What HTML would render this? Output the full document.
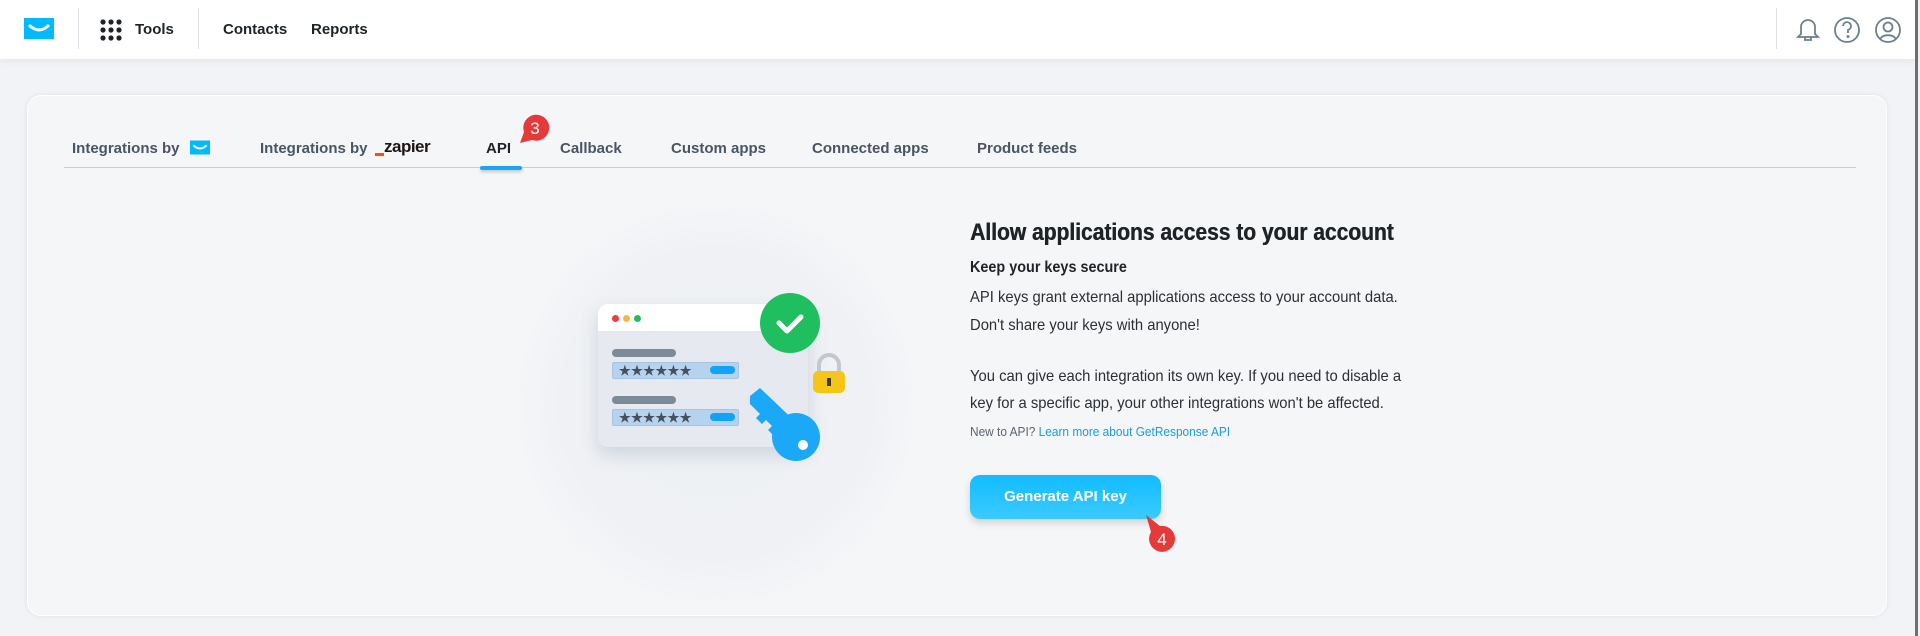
<!DOCTYPE html>
<html><head><meta charset="utf-8"><style>
*{margin:0;padding:0;box-sizing:border-box}
body{width:1920px;height:636px;background:#f1f3f6;font-family:"Liberation Sans",sans-serif;position:relative;overflow:hidden;color:#1e2328}
.hdr{position:absolute;left:0;top:0;width:1916px;height:59px;background:#fff;box-shadow:0 2px 8px rgba(0,0,0,.06)}
.a{position:absolute;white-space:nowrap}
.nav{font-weight:bold;font-size:15px;color:#1e2328;top:21px}
.vd{position:absolute;width:1px;background:#dcdfe3;top:8px;height:41px}
.card{position:absolute;left:27px;top:95px;width:1860px;height:521px;background:#f5f6f8;border-radius:14px;box-shadow:0 0 6px rgba(0,0,0,.08);border:1px solid #fff}
.tab{font-weight:bold;font-size:15px;color:#4a5563;top:140px}
.body{font-size:16px;color:#2a2f36;transform-origin:left;transform:scaleX(.925)}
</style></head><body>
<div class="hdr"></div>
<svg class="a" style="left:24px;top:18px" width="30" height="21" viewBox="0 0 30 21"><rect width="30" height="21" fill="#00baff"/><path d="M5 7 Q15 17 25 7" stroke="#fff" stroke-width="3" fill="none"/></svg>
<div class="vd" style="left:78px"></div>
<svg class="a" style="left:100px;top:19px" width="22" height="22"><g fill="#1e2328"><circle cx="3" cy="3" r="2.6"/><circle cx="11" cy="3" r="2.6"/><circle cx="19" cy="3" r="2.6"/><circle cx="3" cy="11" r="2.6"/><circle cx="11" cy="11" r="2.6"/><circle cx="19" cy="11" r="2.6"/><circle cx="3" cy="19" r="2.6"/><circle cx="11" cy="19" r="2.6"/><circle cx="19" cy="19" r="2.6"/></g></svg>
<div class="a nav" style="left:135px">Tools</div>
<div class="vd" style="left:198px"></div>
<div class="a nav" style="left:223px">Contacts</div>
<div class="a nav" style="left:311px">Reports</div>
<div class="vd" style="left:1776px"></div>
<svg class="a" style="left:1795px;top:15px" width="110" height="30" viewBox="0 0 110 30" fill="none" stroke="#6e7f8e" stroke-width="1.8"><path d="M3 22 L6 19 V12 a7 7 0 0 1 14 0 V19 L23 22 Z M10 22 v3 h6 v-3"/><circle cx="52" cy="15" r="12"/><path d="M48 11 a4 4 0 1 1 5 4 v3"/><circle cx="53" cy="21.5" r=".6" fill="#6e7f8e"/><circle cx="93" cy="15" r="12"/><circle cx="93" cy="12" r="4.5"/><path d="M85 24 a9 7 0 0 1 16 0"/></svg>
<div class="a" style="left:1915px;top:0;width:3px;height:636px;background:#6f6f6f"></div>
<div class="card"></div>
<div class="a tab" style="left:72px">Integrations by</div>
<svg class="a" style="left:190px;top:140px" width="20" height="15" viewBox="0 0 30 21"><rect width="30" height="21" fill="#00baff"/><path d="M5 7 Q15 17 25 7" stroke="#fff" stroke-width="3" fill="none"/></svg>
<div class="a tab" style="left:260px">Integrations by</div>
<div class="a" style="left:375px;top:153px;width:9px;height:3px;background:#ff4f00"></div>
<div class="a" style="left:384px;top:137px;font-weight:bold;font-size:17px;color:#201515;letter-spacing:-.5px">zapier</div>
<div class="a tab" style="left:486px;color:#1e2328">API</div>
<div class="a tab" style="left:560px">Callback</div>
<div class="a tab" style="left:671px">Custom apps</div>
<div class="a tab" style="left:812px">Connected apps</div>
<div class="a tab" style="left:977px">Product feeds</div>
<div class="a" style="left:64px;top:167px;width:1792px;height:1px;background:#c9cdd2"></div>
<div class="a" style="left:480px;top:166px;width:42px;height:4px;border-radius:2px;background:#1aa6f0;box-shadow:0 2px 3px rgba(0,0,0,.2)"></div>
<svg class="a" style="left:512px;top:112px" width="40" height="36"><path d="M8 31 L12 20 A13 13 0 1 1 20 28 Z" fill="#e53a3a"/><text x="23" y="22" font-family="Liberation Sans" font-size="17" fill="#fff" text-anchor="middle">3</text></svg>
<!-- illustration -->
<div class="a" style="left:516px;top:204px;width:400px;height:400px;border-radius:50%;background:radial-gradient(circle,#eef1f4 0%,#eff1f5 55%,rgba(245,246,248,0) 72%)"></div>
<div class="a" style="left:598px;top:304px;width:210px;height:143px;border-radius:10px;background:#e6eaf0;box-shadow:0 8px 18px rgba(80,100,130,.2);overflow:hidden"><div style="height:27px;background:#fff"></div></div>
<div class="a" style="left:612px;top:315px;width:7px;height:7px;border-radius:50%;background:#ee3b3b"></div>
<div class="a" style="left:623px;top:315px;width:7px;height:7px;border-radius:50%;background:#f4b942"></div>
<div class="a" style="left:634px;top:315px;width:7px;height:7px;border-radius:50%;background:#1fbf5f"></div>
<div class="a" style="left:612px;top:349px;width:64px;height:8px;border-radius:4px;background:#7d8a98"></div>
<div class="a" style="left:612px;top:362px;width:127px;height:17px;border-radius:2px;background:#b5d3ef;border:1px solid #a7c4e0;font-size:13px;color:#46505c;font-weight:bold;padding-left:6px;line-height:15px;letter-spacing:.5px">★★★★★★</div>
<div class="a" style="left:710px;top:366px;width:25px;height:8px;border-radius:4px;background:#10a3f6"></div>
<div class="a" style="left:612px;top:396px;width:64px;height:8px;border-radius:4px;background:#7d8a98"></div>
<div class="a" style="left:612px;top:409px;width:127px;height:17px;border-radius:2px;background:#b5d3ef;border:1px solid #a7c4e0;font-size:13px;color:#46505c;font-weight:bold;padding-left:6px;line-height:15px;letter-spacing:.5px">★★★★★★</div>
<div class="a" style="left:710px;top:413px;width:25px;height:8px;border-radius:4px;background:#10a3f6"></div>
<svg class="a" style="left:758px;top:290px" width="80" height="68"><circle cx="32" cy="33" r="30" fill="#1fbf5f"/><path d="M21 33 L29 41 L43 27" stroke="#fff" stroke-width="5" fill="none" stroke-linecap="round" stroke-linejoin="round"/></svg>
<svg class="a" style="left:810px;top:353px" width="40" height="46"><path d="M9 19 V12 a10 10 0 0 1 20 0 V19" stroke="#c3c8ce" stroke-width="4" fill="none"/><rect x="3" y="18" width="32" height="22" rx="5" fill="#f5c518"/><rect x="17" y="25" width="4" height="8" fill="#3a3a3a"/></svg>
<svg class="a" style="left:748px;top:388px" width="80" height="76"><path d="M12 0 L54 40 L40 54 L30 44 L26 48 L20 42 L24 38 L18 32 L14 36 L8 30 L12 26 L2 16 L2 8 Z" fill="#1aa8f7"/><circle cx="48" cy="49" r="24" fill="#1aa8f7"/><circle cx="55" cy="57" r="5" fill="#fff"/></svg>
<!-- text -->
<div class="a" style="left:970px;top:219px;font-weight:bold;font-size:24px;color:#1e2328;transform-origin:left;transform:scaleX(.875);text-shadow:0.5px 0 0 #1e2328">Allow applications access to your account</div>
<div class="a" style="left:970px;top:259px;font-weight:bold;font-size:16px;color:#1e2328;transform-origin:left;transform:scaleX(.9)">Keep your keys secure</div>
<div class="a body" style="left:970px;top:289px">API keys grant external applications access to your account data.</div>
<div class="a body" style="left:970px;top:317px">Don't share your keys with anyone!</div>
<div class="a body" style="left:970px;top:368px">You can give each integration its own key. If you need to disable a</div>
<div class="a body" style="left:970px;top:395px">key for a specific app, your other integrations won't be affected.</div>
<div class="a" style="left:970px;top:425px;font-size:12.5px;color:#5a6470;transform-origin:left;transform:scaleX(.95)">New to API? <span style="color:#1a9bd8">Learn more about GetResponse API</span></div>
<div class="a" style="left:970px;top:475px;width:191px;height:44px;border-radius:10px;background:linear-gradient(#11bcff,#3bcaff);box-shadow:0 4px 8px rgba(0,0,0,.15);color:#fff;font-weight:bold;font-size:15px;text-align:center;line-height:44px">Generate API key</div>
<svg class="a" style="left:1144px;top:514px" width="40" height="40"><path d="M2 1 L16 12 A13 13 0 1 1 7 18 Z" fill="#e53a3a"/><text x="18" y="31" font-family="Liberation Sans" font-size="17" fill="#fff" text-anchor="middle">4</text></svg>
</body></html>
